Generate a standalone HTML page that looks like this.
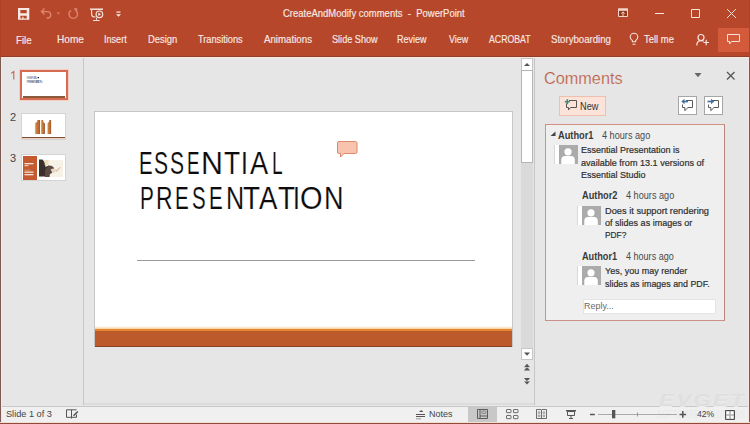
<!DOCTYPE html>
<html><head><meta charset="utf-8">
<style>
*{margin:0;padding:0;box-sizing:border-box}
html,body{width:750px;height:424px;overflow:hidden;background:#e6e6e6;font-family:"Liberation Sans",sans-serif;position:relative}
.a{position:absolute}
.t{position:absolute;white-space:nowrap;line-height:1;transform-origin:0 0}
.tab{color:#f9e9e4;font-size:10.2px;top:35px;-webkit-text-stroke:0.15px #f9e9e4}
.cm{font-size:10px;color:#4a4a4a}
.cm2{font-size:9.5px;color:#2e2e2e;-webkit-text-stroke:0.2px #2e2e2e}
.cb{font-size:10px;color:#3a3a3a;font-weight:bold}
.tl{font-size:31px;color:#0c0c0c;-webkit-text-stroke:0.15px #fff}
.st{font-size:9.3px;color:#444;top:410.2px}
</style></head><body>
<!-- window frame -->
<div class="a" style="left:0;top:0;width:750px;height:57px;background:#b7472a"></div>
<div class="a" style="left:0;top:56px;width:750px;height:1px;background:#8e3f2a"></div>
<div class="a" style="left:0;top:57px;width:750px;height:1px;background:#fbe5de"></div>

<!-- title bar -->
<div class="t" style="left:283.4px;top:9px;font-size:10.2px;color:#f9e9e4;transform:scaleX(0.93);-webkit-text-stroke:0.15px #f9e9e4">CreateAndModify comments&nbsp; -&nbsp; PowerPoint</div>

<!-- ribbon tabs -->
<div class="t tab" style="left:15.8px;top:35.8px;transform:scaleX(0.947)">File</div>
<div class="t tab" style="left:57.2px;transform:scaleX(0.99)">Home</div>
<div class="t tab" style="left:104.1px;transform:scaleX(0.892)">Insert</div>
<div class="t tab" style="left:148.0px;transform:scaleX(0.92)">Design</div>
<div class="t tab" style="left:198.4px;transform:scaleX(0.904)">Transitions</div>
<div class="t tab" style="left:263.9px;transform:scaleX(0.952)">Animations</div>
<div class="t tab" style="left:331.6px;transform:scaleX(0.896)">Slide Show</div>
<div class="t tab" style="left:397.3px;transform:scaleX(0.882)">Review</div>
<div class="t tab" style="left:448.9px;transform:scaleX(0.873)">View</div>
<div class="t tab" style="left:489.4px;transform:scaleX(0.858)">ACROBAT</div>
<div class="t tab" style="left:550.7px;transform:scaleX(0.944)">Storyboarding</div>
<div class="t tab" style="left:643.5px;transform:scaleX(0.928)">Tell me</div>
<div class="a" style="left:718px;top:28px;width:31px;height:24px;background:#d35a3a"></div>

<!-- left pane separator -->
<div class="a" style="left:83px;top:58px;width:1px;height:347px;background:#c6c6c6"></div>
<div class="a" style="left:84px;top:403px;width:450px;height:2px;background:#dcdcdc"></div>

<!-- thumbnails -->

<div class="a" style="left:20px;top:70px;width:48px;height:30px;background:#fff;border:2px solid #d56b50;box-shadow:0 0 0 1px #f1cfc4"></div>
<div class="a" style="left:23px;top:96px;width:42px;height:1.5px;background:#8b5a3c"></div>
<div class="t" style="left:10px;top:111.7px;font-size:11px;color:#444">2</div>
<div class="a" style="left:21px;top:113px;width:45px;height:27px;background:#fff;border:1px solid #d4d4d4"></div>
<div class="a" style="left:22px;top:137px;width:43px;height:1px;background:#7b4b30"></div>
<div class="a" style="left:22px;top:138px;width:43px;height:1px;background:#f0d2c0"></div>
<div class="t" style="left:10px;top:153.1px;font-size:11px;color:#444">3</div>
<div class="a" style="left:21px;top:154px;width:45px;height:27px;background:#fff;border:1px solid #d4d4d4"></div>
<div class="a" style="left:23px;top:156px;width:14px;height:23.5px;background:#c45a2e"></div>
<div class="a" style="left:39px;top:159.5px;width:24px;height:17px;background:#f7f2e8"></div>


<!-- slide -->
<div class="a" style="left:94px;top:111px;width:419px;height:236px;background:#fff;border:1px solid #c6c6c6;border-bottom:none"></div>
<div class="a" style="left:95px;top:326px;width:417px;height:3px;background:linear-gradient(#fff,#f6cf9c)"></div>
<div class="a" style="left:95px;top:329px;width:417px;height:2px;background:#e3862f"></div>
<div class="a" style="left:95px;top:331px;width:417px;height:16px;background:#bc5a2c;border-bottom:1px solid #8c4524"></div>
<div class="a" style="left:137px;top:260px;width:338px;height:1px;background:#9a9a9a"></div>
<div class="t tl" style="left:139.3px;top:147.8px;transform:scaleX(0.657)">E</div>
<div class="t tl" style="left:154.4px;top:147.8px;transform:scaleX(0.680)">S</div>
<div class="t tl" style="left:170.4px;top:147.8px;transform:scaleX(0.680)">S</div>
<div class="t tl" style="left:186.9px;top:147.8px;transform:scaleX(0.606)">E</div>
<div class="t tl" style="left:201.4px;top:147.8px;transform:scaleX(0.980)">N</div>
<div class="t tl" style="left:223.7px;top:147.8px;transform:scaleX(0.850)">T</div>
<div class="t tl" style="left:241.4px;top:147.8px;transform:scaleX(0.8)">I</div>
<div class="t tl" style="left:249.7px;top:147.8px;transform:scaleX(0.878)">A</div>
<div class="t tl" style="left:271.6px;top:147.8px;transform:scaleX(0.616)">L</div>
<div class="t tl" style="left:139.5px;top:183px;transform:scaleX(0.668)">P</div>
<div class="t tl" style="left:156.3px;top:183px;transform:scaleX(0.738)">R</div>
<div class="t tl" style="left:174.7px;top:183px;transform:scaleX(0.663)">E</div>
<div class="t tl" style="left:191.7px;top:183px;transform:scaleX(0.659)">S</div>
<div class="t tl" style="left:209.2px;top:183px;transform:scaleX(0.663)">E</div>
<div class="t tl" style="left:225.7px;top:183px;transform:scaleX(0.810)">N</div>
<div class="t tl" style="left:243.3px;top:183px;transform:scaleX(0.898)">T</div>
<div class="t tl" style="left:259.0px;top:183px;transform:scaleX(0.888)">A</div>
<div class="t tl" style="left:277.8px;top:183px;transform:scaleX(0.898)">T</div>
<div class="t tl" style="left:293.2px;top:183px;transform:scaleX(0.8)">I</div>
<div class="t tl" style="left:300.1px;top:183px;transform:scaleX(0.935)">O</div>
<div class="t tl" style="left:324.1px;top:183px;transform:scaleX(0.873)">N</div>


<!-- scrollbar -->
<div class="a" style="left:521px;top:58px;width:12px;height:302px;background:#dadada"></div>
<div class="a" style="left:521px;top:58px;width:12px;height:13px;background:#fff;border:1px solid #c6c6c6"></div>
<div class="a" style="left:521px;top:70px;width:12px;height:93px;background:#fff;border:1px solid #b4b4b4"></div>
<div class="a" style="left:521px;top:348px;width:12px;height:12px;background:#fff;border:1px solid #c6c6c6"></div>
<div class="a" style="left:534px;top:58px;width:1px;height:347px;background:#c6c6c6"></div>

<!-- comments pane -->
<div class="t" style="left:544.3px;top:70.3px;font-size:17px;color:#bb5c44;transform:scaleX(0.956);-webkit-text-stroke:0.22px #e6e6e6">Comments</div>
<div class="a" style="left:559px;top:96px;width:47px;height:20px;background:#fce3d9;border:1px solid #f0c0ae"></div>
<div class="t" style="left:580.1px;top:102.3px;font-size:10.4px;color:#333;transform:scaleX(0.885)">New</div>
<div class="a" style="left:678px;top:96px;width:19px;height:19px;background:#fff;border:1px solid #a6a6a6"></div>
<div class="a" style="left:704px;top:96px;width:19px;height:19px;background:#fff;border:1px solid #a6a6a6"></div>

<div class="a" style="left:545px;top:124px;width:180px;height:197px;background:#efefef;border:1px solid #d48e82;border-right-color:#b98580;border-bottom-color:#c99189"></div>
<div class="t cb" style="left:558.4px;top:131px;transform:scaleX(0.926)">Author1</div>
<div class="t cm" style="left:602px;top:131px;transform:scaleX(0.913)">4 hours ago</div>
<div class="t cm2" style="left:581px;top:145.2px;transform:scaleX(0.946)">Essential Presentation is</div>
<div class="t cm2" style="left:581px;top:157.5px;transform:scaleX(0.955)">available from 13.1 versions of</div>
<div class="t cm2" style="left:581px;top:169.7px;transform:scaleX(0.946)">Essential Studio</div>

<div class="t cb" style="left:582.4px;top:191.2px;transform:scaleX(0.926)">Author2</div>
<div class="t cm" style="left:625.6px;top:191.2px;transform:scaleX(0.913)">4 hours ago</div>
<div class="t cm2" style="left:604.8px;top:205.5px;transform:scaleX(0.975)">Does it support rendering</div>
<div class="t cm2" style="left:604.8px;top:217.6px;transform:scaleX(0.95)">of slides as images or</div>
<div class="t cm2" style="left:604.8px;top:229.9px;transform:scaleX(0.88)">PDF?</div>

<div class="t cb" style="left:582.3px;top:251.7px;transform:scaleX(0.915)">Author1</div>
<div class="t cm" style="left:625.7px;top:251.7px;transform:scaleX(0.904)">4 hours ago</div>
<div class="t cm2" style="left:604.8px;top:266.3px;transform:scaleX(0.949)">Yes, you may render</div>
<div class="t cm2" style="left:604.8px;top:278.5px;transform:scaleX(0.935)">slides as images and PDF.</div>

<div class="a" style="left:583px;top:299px;width:133px;height:15px;background:#fff;border:1px solid #e4e4e4"></div>
<div class="t" style="left:583.6px;top:301.7px;font-size:9.2px;color:#6a6a6a;transform:scaleX(0.976)">Reply...</div>

<!-- avatars -->
<div class="a" style="left:555px;top:145px;width:23px;height:19px;background:#ababab;border-left:4px solid #fff;box-shadow:-1px 0 0 #d8d8d8"></div>
<div class="a" style="left:578px;top:206px;width:23px;height:19px;background:#ababab;border-left:4px solid #fff;box-shadow:-1px 0 0 #d8d8d8"></div>
<div class="a" style="left:578px;top:266px;width:23px;height:19px;background:#ababab;border-left:4px solid #fff;box-shadow:-1px 0 0 #d8d8d8"></div>

<!-- status bar -->
<div class="a" style="left:0;top:406px;width:750px;height:1px;background:#c8c8c8"></div>
<div class="a" style="left:0;top:407px;width:750px;height:17px;background:#f0f0f0"></div>
<div class="t st" style="left:5.9px;transform:scaleX(0.987)">Slide 1 of 3</div>
<div class="t st" style="left:428.9px;top:410.2px;transform:scaleX(0.965)">Notes</div>
<div class="a" style="left:468px;top:407px;width:29px;height:17px;background:#c8c8c8"></div>
<div class="t st" style="left:697.3px;transform:scaleX(0.928)">42%</div>

<!-- icons overlay -->
<svg class="a" style="left:0;top:0" width="750" height="424" viewBox="0 0 750 424">
 <g fill="none" stroke="#f7e4de" stroke-width="1">
  <!-- save -->
  <path d="M18 8h11.3v11.8h-11.3z M20.4 10.1v3.1h6.3v-3.1z M20.4 15.8v2.8h1.9v-1.8h1.2v1.8h3.2v-2.8z" fill="#f9e9e4" fill-rule="evenodd" stroke="none"/>
  <!-- ribbon display -->
  <path d="M618.5 9h9v7.5h-9z" fill="#93391f" stroke="#f6d6cb"/><path d="M618 8.5h10v2.3h-10z" fill="#f6d6cb" stroke="none"/><path d="M623 12v4.5 M621.3 13.5l1.7-1.6 1.7 1.6" stroke="#f6d6cb"/>
  <!-- minimize -->
  <path d="M655 13.5h9"/>
  <!-- maximize -->
  <path d="M691.5 9.5h8v8h-8z"/>
  <!-- close -->
  <path d="M727 9l9 9 M736 9l-9 9"/>
  <!-- presentation -->
  <path d="M90 9.2h13" stroke-width="1.5"/><path d="M91.6 10v4a3 3 0 0 0 3 3h1" stroke-width="1.1"/><circle cx="99.4" cy="14.3" r="3.3" stroke-width="1.2"/><path d="M96.5 17.8v2 M93 20.5h6.5" stroke-width="1"/>
  <path d="M98.3 12.5l2.7 1.8-2.7 1.8z" fill="#f9e9e4" stroke="none"/>
  <!-- customize -->
  <path d="M116.5 11.5h4v1.2h-4z" fill="#f9e9e4" stroke="none"/>
  <path d="M116 14.2h5l-2.5 2.6z" fill="#f9e9e4" stroke="none"/>
  <!-- bulb -->
  <path d="M632.4 41.8v-1.2c-1.3-.9-2.2-2.2-2.2-3.6a3.8 3.8 0 0 1 7.6 0c0 1.4-.9 2.7-2.2 3.6v1.2z M632.5 44.2h3" stroke-width="1.1"/>
  <!-- person -->
  <circle cx="701" cy="37.5" r="3" stroke-width="1.2"/>
  <path d="M696.8 45.5c0-3 1.8-4.9 4.3-4.9c1.2 0 2 .3 2.5.8 M706.2 39.8v5.4 M703.5 42.5h5.4" stroke-width="1.2"/>
  <!-- comments button -->
  <path d="M727.5 34.5h12v7h-8l-2 2.5v-2.5h-2z"/>
 </g>
 <g fill="none" stroke="#de8670" stroke-width="1">
  <!-- undo -->
  <path d="M41.5 11.6h6a3.2 3.2 0 0 1 0 6.4h-1 M44.5 8.6l-3 3 3 3" stroke-width="1.4"/>
  <path d="M56.5 12.4h3.6l-1.8 2.2z" fill="#de8670" stroke="none"/>
  <!-- redo -->
  <path d="M75.4 10.4a4.3 4.3 0 1 1 -4.3 0 M74 9h2.5v3" stroke-width="1.4"/>
 </g>
 <path d="M11.2 73.4l2.6-1.9v8.1" fill="none" stroke="#c0644c" stroke-width="1.1"/>
 <!-- thumbnail 1 text blob -->
 <text x="26.5" y="79.3" font-family="Liberation Sans" font-size="4" fill="#8a94b0" textLength="11">ESSENTIAL</text>
 <text x="26.5" y="83.3" font-family="Liberation Sans" font-size="4" fill="#6a7080" textLength="16">PRESENTATION</text>
 <rect x="37.5" y="77" width="1.5" height="1.2" fill="#222"/>
 <!-- thumbnail 2 bars -->
 <defs>
  <linearGradient id="bg1" x1="0" x2="1" y1="0" y2="0"><stop offset="0" stop-color="#f5d9a8"/><stop offset="0.25" stop-color="#cc8040"/><stop offset="0.8" stop-color="#b86a32"/><stop offset="1" stop-color="#7a4020"/></linearGradient>
 </defs>
 <g fill="url(#bg1)">
  <path d="M34.8 134v-10.5l2.5-2v-1.5h2.6v14z"/>
  <path d="M40.8 134v-14h2.4l.2 2 1.5 1.5v10.5z"/>
  <path d="M47.2 134v-10.5l2-2v-1.5h1.9v14z"/>
 </g>
 <g fill="#eee3da">
  <rect x="24.5" y="163" width="9" height="1.3"/><rect x="24.5" y="165.2" width="4" height="1"/><rect x="24.5" y="169.7" width="6" height="0.8" fill="#d99a80"/><rect x="24.5" y="171.5" width="9" height="1.3"/><rect x="24.5" y="174" width="9" height="1.3"/>
 </g>
 <!-- thumb3 photo -->
 <path d="M39 159.5h3.5l1.5 2 1 2 .5 3.5 3-1.5 3 .5 2 2.5 -1 3 -3 2.5 v2.5 h-10.5z" fill="#3a302b"/>
 <path d="M45 170l3-3.5 3.5-.8 2.5 2 -.5 3 -2 2.5 -2 1v2.8h-4.5z" fill="#5c4a42"/>
 <path d="M50.5 169.5l2.5-1 3 1-1 2.5-2.5 1z" fill="#e7d6c6"/>
 <path d="M55 171l5-4 1 .5-4.5 4.5z" fill="#d8b890" opacity=".8"/>
 <rect x="44.5" y="160" width="4" height="5" fill="#e9d49c" opacity=".6"/>
 <!-- slide comment bubble -->
 <path d="M339 141.5h16.5a1.5 1.5 0 0 1 1.5 1.5v9a1.5 1.5 0 0 1 -1.5 1.5h-11.5l-3.5 3.6v-3.6h-1.5a1.5 1.5 0 0 1 -1.5 -1.5v-9a1.5 1.5 0 0 1 1.5 -1.5z" fill="#f8c4ae" stroke="#dc8a6e" stroke-width="1"/>
 <!-- scroll arrows -->
 <path d="M524 66l3-3 3 3z" fill="#555"/>
 <path d="M524 352.5h6l-3 3.2z" fill="#555"/>
 <path d="M524 367.2l3-3.4 3 3.4z M524 370.4l3-3.6 3 3.6z" fill="#555"/><path d="M524.5 367.6h5" stroke="#e6e6e6" stroke-width="0.6"/>
 <path d="M524 378h6l-3 3.6z M524 381.2h6l-3 3.4z" fill="#555"/><path d="M524.5 381h5" stroke="#e6e6e6" stroke-width="0.6"/>
 <!-- comments pane dropdown & close -->
 <path d="M694.5 73h7l-3.5 4.2z" fill="#666"/>
 <path d="M727 72l7.5 7.5 M734.5 72l-7.5 7.5" stroke="#555" stroke-width="1.3"/>
 <!-- new comment icon -->
 <path d="M569 100.5h7.5v7h-6l-2 2.5v-2.5h-2v-4" fill="none" stroke="#555" stroke-width="1"/>
 <path d="M567.3 99.2v5 M564.8 101.7h5" stroke="#3f8a7b" stroke-width="1.6"/>
 <!-- prev/next icons -->
 <path d="M686 100.5h6.5v7h-4.5l-3.2 3.2v-3.2h-2.3v-3" fill="none" stroke="#5a5a5a" stroke-width="1"/>
 <path d="M683.5 101.5h4.5" stroke="#41719c" stroke-width="1.7"/>
 <path d="M681.3 101.5l3.2-2.8v5.6z" fill="#41719c"/>
 <path d="M712 100.5h6.5v7h-4.5l-3.2 3.2v-3.2h-2.3v-3" fill="none" stroke="#5a5a5a" stroke-width="1"/>
 <path d="M707.5 101.5h4.5" stroke="#41719c" stroke-width="1.7"/>
 <path d="M714.2 101.5l-3.2-2.8v5.6z" fill="#41719c"/>
 <!-- collapse triangle -->
 <path d="M550.5 136h5v-4.5z" fill="#444"/>
 <!-- avatar persons -->
 <g fill="#fff">
  <circle cx="568" cy="151.8" r="3.6"/><path d="M561.3 164v-4.5c0-2.5 2-3.5 3.5-3.5h6.5c1.5 0 3.5 1 3.5 3.5v4.5z"/>
  <circle cx="591" cy="212.8" r="3.6"/><path d="M584.3 225v-4.5c0-2.5 2-3.5 3.5-3.5h6.5c1.5 0 3.5 1 3.5 3.5v4.5z"/>
  <circle cx="591" cy="272.8" r="3.6"/><path d="M584.3 285v-4.5c0-2.5 2-3.5 3.5-3.5h6.5c1.5 0 3.5 1 3.5 3.5v4.5z"/>
 </g>
 <!-- status bar icons -->
 <g fill="none" stroke="#555" stroke-width="1">
  <path d="M66.5 409.8h5v7.5h-5z M71.5 409.8v8.7 M71.5 409.8h5 M76.5 414.5v2.8h-5" stroke-linejoin="round"/><path d="M73.5 415.8l4.3-4.3" stroke-width="1.6"/>
  <path d="M416 414.5h9 M416 416.5h9"/>
  <path d="M416 418.8h5" stroke="#999"/>
  <path d="M477.5 409.5h10v9h-10z M480 409.5v9 M480 416h7.5" stroke="#5c5c5c"/>
  <rect x="481.8" y="411" width="4" height="2.4" rx="0.5" stroke="#777" stroke-width="0.8"/>
  <g stroke="#5c5c5c" stroke-width="0.9"><rect x="506.5" y="409.5" width="4.5" height="3.2" rx="0.5"/><rect x="513.5" y="409.5" width="4.5" height="3.2" rx="0.5"/>
  <rect x="506.5" y="415.5" width="4.5" height="3.2" rx="0.5"/><rect x="513.5" y="415.5" width="4.5" height="3.2" rx="0.5"/></g>
  <path d="M536.5 409.5h4.5l.5.5.5-.5h4.5v9h-4.5l-.5.5-.5-.5h-4.5z M541.5 410v9" stroke="#5c5c5c" stroke-width="0.9"/>
  <path d="M538.3 411.8h1.6v1.6h-1.6z M538.3 415h1.6v1.6h-1.6z M543.1 411.8h1.6v1.6h-1.6z M543.1 415h1.6v1.6h-1.6z" stroke="#888" stroke-width="0.7"/>
  <path d="M567.5 411.5h7v4h-7z M571 415.5v2.5 M569 418.5h4"/>
  <path d="M598 414.5h79" stroke="#aaa"/>
  <path d="M637.5 412.5v4" stroke="#999"/>
  <path d="M725.5 410.5h9v9h-9z" fill="#8c8c8c" stroke="#505050"/>
 </g>
 <path d="M566 410h10v1.5h-10z" fill="#555"/>
 <path d="M419 412l2.2-2 2.2 2z" fill="#555"/>
 <path d="M590 413.8h4.8v1.5h-4.8z M679.6 413.7h6.4v1.5h-6.4z M682.05 410.9h1.5v6.9h-1.5z" fill="#555"/>
 <rect x="612" y="410" width="3.3" height="8.3" fill="#555"/>
 <path d="M726.3 411.3h3.2v3.2h-3.2z M730.5 415.5h3.2v3.2h-3.2z M730.5 411.3h3.2v3.2h-3.2z M726.3 415.5h3.2v3.2h-3.2z" fill="#fff"/>
 <rect x="729.6" y="414.6" width="0.8" height="0.8" fill="#fff"/>
</svg>

<!-- watermark -->
<div class="t" style="left:659px;top:393px;font-size:16px;font-weight:bold;font-style:italic;color:#dfdfdf;letter-spacing:1.6px;transform:scaleX(1.4);text-shadow:0 1px 0 #ececec">EVGET</div>
<div class="t" style="left:657px;top:410px;font-size:10px;font-style:italic;color:#000;opacity:0.03;transform:scaleX(0.72);letter-spacing:0.3px">SOFTWARE SOLUTIONS</div>

<!-- window borders -->
<div class="a" style="left:0;top:0;width:1px;height:57px;background:#ad4227"></div>
<div class="a" style="left:749px;top:0;width:1px;height:57px;background:#ad4227"></div>
<div class="a" style="left:0;top:57px;width:1px;height:367px;background:#7f5a52"></div>
<div class="a" style="left:1px;top:58px;width:1px;height:364px;background:#f7e6e2"></div>
<div class="a" style="left:749px;top:57px;width:1px;height:367px;background:#7f5a52"></div>
<div class="a" style="left:748px;top:58px;width:1px;height:364px;background:#f7e6e2"></div>
<div class="a" style="left:0;top:422px;width:750px;height:1px;background:#f3dcd4"></div>
<div class="a" style="left:0;top:423px;width:750px;height:1px;background:#8f4c3a"></div>
</body></html>
